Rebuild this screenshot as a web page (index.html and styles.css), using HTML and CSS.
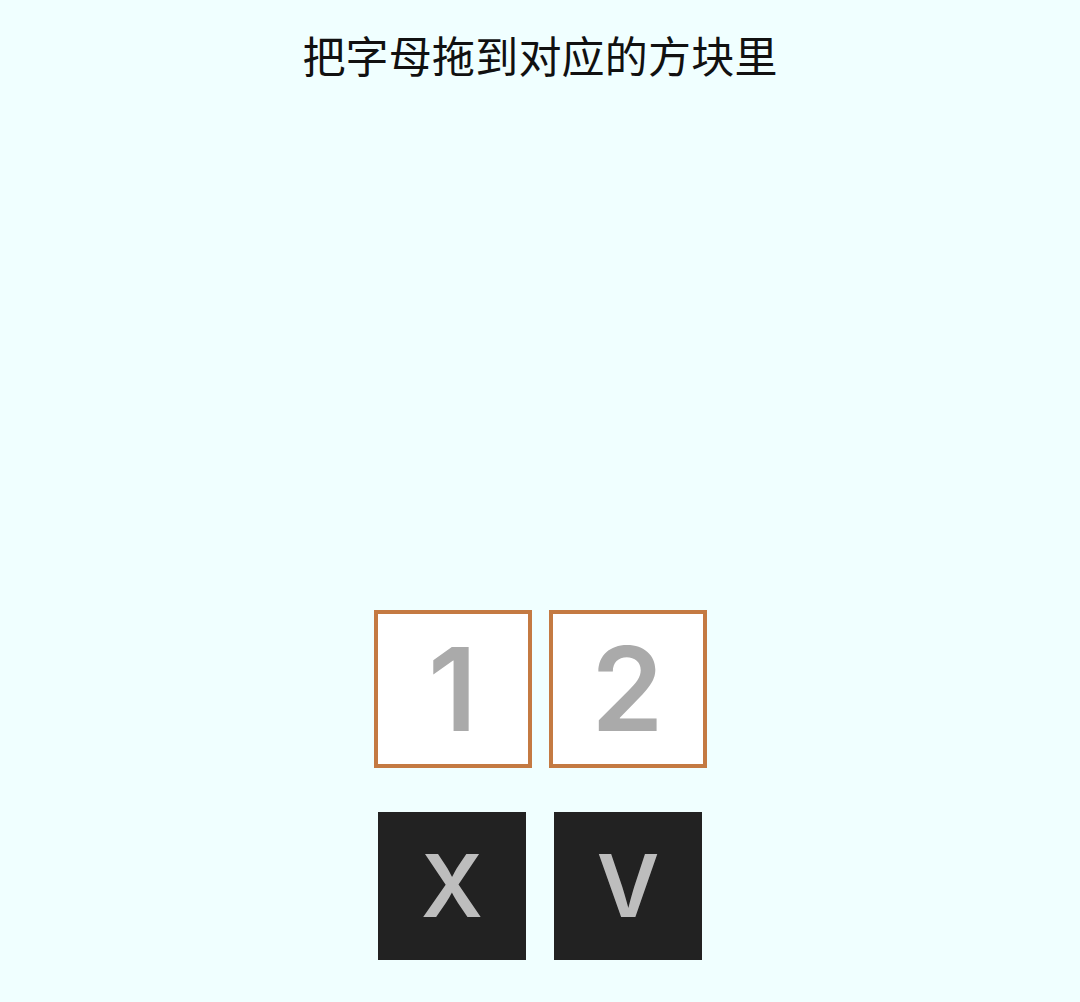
FILE: index.html
```html
<!DOCTYPE html>
<html lang="zh">
<head>
<meta charset="utf-8">
<link rel="stylesheet" href="styles.css">
<title>把字母拖到对应的方块里</title>
</head>
<body>
<main class="page">
  <h1 class="title">把字母拖到对应的方块里</h1>
  <div class="targets">
    <div class="slot"><span>1</span></div>
    <div class="slot"><span>2</span></div>
  </div>
  <div class="tiles">
    <div class="tile">X</div>
    <div class="tile">V</div>
  </div>
</main>
</body>
</html>
```
FILE: styles.css
```css
html, body {
  margin: 0;
  padding: 0;
  background: #f0ffff;
}
.page {
  width: 1080px;
  height: 1002px;
  display: flex;
  flex-direction: column;
  align-items: center;
}
.title {
  margin: 24px 0 0 0;
  font-family: "Noto Sans CJK SC", "Noto Sans", sans-serif;
  font-weight: 400;
  font-size: 43px;
  line-height: 60px;
  color: #111;
  letter-spacing: 0.2px;
}
.targets {
  margin-top: 526px;
  display: flex;
  gap: 17px;
}
.slot {
  width: 150px;
  height: 150px;
  border: 4px solid #c47a42;
  background: #ffffff;
  display: flex;
  align-items: center;
  justify-content: center;
  font-family: Inter, "Liberation Sans", sans-serif;
  font-weight: 600;
  font-size: 116px;
  color: #aaaaaa;
  line-height: 1;
}
.tiles {
  margin-top: 44px;
  display: flex;
  gap: 28px;
}
.tile {
  width: 148px;
  height: 148px;
  background: #222222;
  color: #bdbdbd;
  display: flex;
  align-items: center;
  justify-content: center;
  font-family: Inter, "Liberation Sans", sans-serif;
  font-weight: 600;
  font-size: 86px;
  line-height: 1;
}
```
